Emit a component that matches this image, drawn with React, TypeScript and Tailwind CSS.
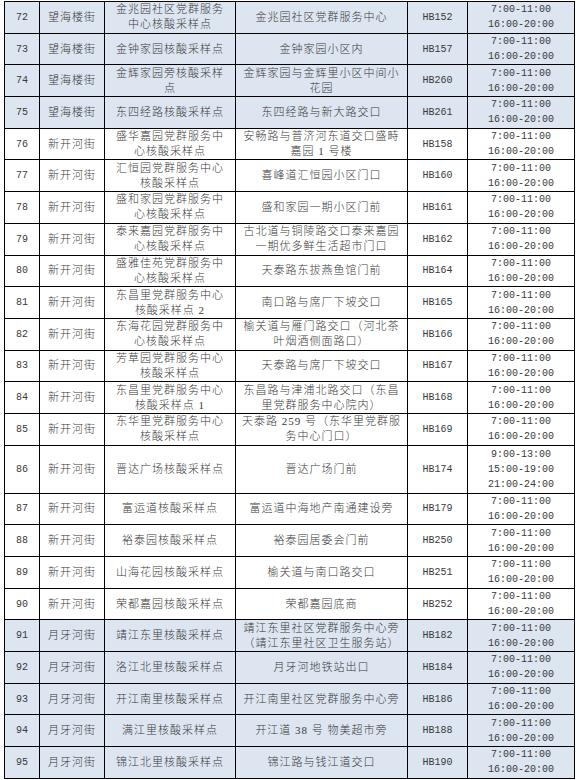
type Row = {
  no: number;
  street: string;
  site: string[];
  addr: string[];
  code: string;
  times: string[];
  tall?: boolean;
};

const T2 = ['7:00-11:00', '16:00-20:00'];

const rows: Row[] = [
  { no: 72, street: '望海楼街', site: ['金兆园社区党群服务', '中心核酸采样点'], addr: ['金兆园社区党群服务中心'], code: 'HB152', times: T2 },
  { no: 73, street: '望海楼街', site: ['金钟家园核酸采样点'], addr: ['金钟家园小区内'], code: 'HB157', times: T2 },
  { no: 74, street: '望海楼街', site: ['金辉家园旁核酸采样', '点'], addr: ['金辉家园与金辉里小区中间小', '花园'], code: 'HB260', times: T2 },
  { no: 75, street: '望海楼街', site: ['东四经路核酸采样点'], addr: ['东四经路与新大路交口'], code: 'HB261', times: T2 },
  { no: 76, street: '新开河街', site: ['盛华嘉园党群服务中', '心核酸采样点'], addr: ['安畅路与普济河东道交口盛畤', '嘉园 1 号楼'], code: 'HB158', times: T2 },
  { no: 77, street: '新开河街', site: ['汇恒园党群服务中心', '核酸采样点'], addr: ['喜峰道汇恒园小区门口'], code: 'HB160', times: T2 },
  { no: 78, street: '新开河街', site: ['盛和家园党群服务中', '心核酸采样点'], addr: ['盛和家园一期小区门前'], code: 'HB161', times: T2 },
  { no: 79, street: '新开河街', site: ['泰来嘉园党群服务中', '心核酸采样点'], addr: ['古北道与铜陵路交口泰来嘉园', '一期优多鲜生活超市门口'], code: 'HB162', times: T2 },
  { no: 80, street: '新开河街', site: ['盛雅佳苑党群服务中', '心核酸采样点'], addr: ['天泰路东拔燕鱼馆门前'], code: 'HB164', times: T2 },
  { no: 81, street: '新开河街', site: ['东昌里党群服务中心', '核酸采样点 2'], addr: ['南口路与席厂下坡交口'], code: 'HB165', times: T2 },
  { no: 82, street: '新开河街', site: ['东海花园党群服务中', '心核酸采样点'], addr: ['榆关道与雁门路交口（河北茶', '叶烟酒侧面路口）'], code: 'HB166', times: T2 },
  { no: 83, street: '新开河街', site: ['芳草园党群服务中心', '核酸采样点'], addr: ['天泰路与席厂下坡交口'], code: 'HB167', times: T2 },
  { no: 84, street: '新开河街', site: ['东昌里党群服务中心', '核酸采样点 1'], addr: ['东昌路与津浦北路交口（东昌', '里党群服务中心院内）'], code: 'HB168', times: T2 },
  { no: 85, street: '新开河街', site: ['东华里党群服务中心', '核酸采样点'], addr: ['天泰路 259 号（东华里党群服', '务中心门口）'], code: 'HB169', times: T2 },
  { no: 86, street: '新开河街', site: ['晋达广场核酸采样点'], addr: ['晋达广场门前'], code: 'HB174', times: ['9:00-13:00', '15:00-19:00', '21:00-24:00'], tall: true },
  { no: 87, street: '新开河街', site: ['富运道核酸采样点'], addr: ['富运道中海地产南通建设旁'], code: 'HB179', times: T2 },
  { no: 88, street: '新开河街', site: ['裕泰园核酸采样点'], addr: ['裕泰园居委会门前'], code: 'HB250', times: T2 },
  { no: 89, street: '新开河街', site: ['山海花园核酸采样点'], addr: ['榆关道与南口路交口'], code: 'HB251', times: T2 },
  { no: 90, street: '新开河街', site: ['荣都嘉园核酸采样点'], addr: ['荣都嘉园底商'], code: 'HB252', times: T2 },
  { no: 91, street: '月牙河街', site: ['靖江东里核酸采样点'], addr: ['靖江东里社区党群服务中心旁', '（靖江东里社区卫生服务站）'], code: 'HB182', times: T2 },
  { no: 92, street: '月牙河街', site: ['洛江北里核酸采样点'], addr: ['月牙河地铁站出口'], code: 'HB184', times: T2 },
  { no: 93, street: '月牙河街', site: ['开江南里核酸采样点'], addr: ['开江南里社区党群服务中心旁'], code: 'HB186', times: T2 },
  { no: 94, street: '月牙河街', site: ['满江里核酸采样点'], addr: ['开江道 38 号 物美超市旁'], code: 'HB188', times: T2 },
  { no: 95, street: '月牙河街', site: ['锦江北里核酸采样点'], addr: ['锦江路与钱江道交口'], code: 'HB190', times: T2 },
];

const cjk = "font-['Liberation_Serif','Noto_Sans_CJK_SC',serif] text-[11px] font-light tracking-[1px] leading-[15px]";
const mono = "font-['Liberation_Mono','Noto_Sans_CJK_SC',monospace] text-[10px] leading-[15px]";
const cell = 'border border-black text-center align-middle p-0 overflow-hidden';

function Lines({ lines }: { lines: string[] }) {
  return (
    <>
      {lines.map((l, i) => (
        <div key={i} className="whitespace-nowrap">
          {l}
        </div>
      ))}
    </>
  );
}

export default function App() {
  return (
    <div className="min-h-[780px] bg-white pt-[1px] pl-[4px] text-[#3a3a3a]">
      <table className="table-fixed border-collapse w-[570px]">
        <colgroup>
          <col className="w-[35px]" />
          <col className="w-[65px]" />
          <col className="w-[131px]" />
          <col className="w-[172px]" />
          <col className="w-[60px]" />
          <col className="w-[107px]" />
        </colgroup>
        <tbody>
          {rows.map((r) => {
            const blue = r.street !== '新开河街';
            return (
              <tr
                key={r.no}
                className={`${r.tall ? 'h-[48px]' : 'h-[31.7px]'} ${blue ? 'bg-[#dce5f0]' : 'bg-white'}`}
              >
                <td className={`${cell} ${mono}`}>{r.no}</td>
                <td className={`${cell} ${cjk}`}>{r.street}</td>
                <td className={`${cell} ${cjk}`}>
                  <Lines lines={r.site} />
                </td>
                <td className={`${cell} ${cjk}`}>
                  <Lines lines={r.addr} />
                </td>
                <td className={`${cell} ${mono}`}>{r.code}</td>
                <td className={`${cell} ${mono}`}>
                  <Lines lines={r.times} />
                </td>
              </tr>
            );
          })}
        </tbody>
      </table>
    </div>
  );
}
